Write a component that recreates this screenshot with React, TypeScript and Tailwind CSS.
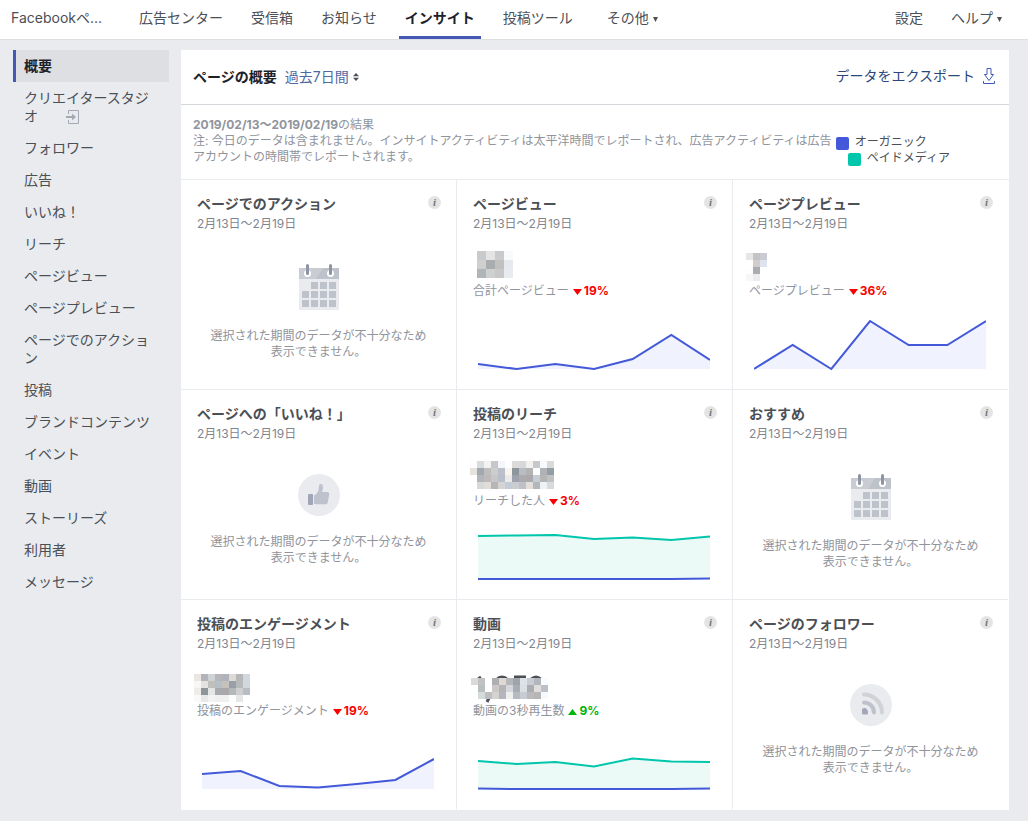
import clsx from "clsx";

type Series = { color: string; fill?: string; points: number[] };

type Mosaic = { x: number; y: number; size: number; rows: string[] };

type Card = {
  title: string;
  empty?: "calendar" | "like" | "follow";
  label?: string;
  change?: string;
  up?: boolean;
  mosaic?: Mosaic;
  peek?: boolean;
  series?: Series[];
};

const BLUE = "#4359d9";
const GREEN = "#00c6ac";

const mainTabs = ["広告センター", "受信箱", "お知らせ", "インサイト", "投稿ツール"];

const sideLinks = [
  "概要",
  "クリエイタースタジオ",
  "フォロワー",
  "広告",
  "いいね！",
  "リーチ",
  "ページビュー",
  "ページプレビュー",
  "ページでのアクション",
  "投稿",
  "ブランドコンテンツ",
  "イベント",
  "動画",
  "ストーリーズ",
  "利用者",
  "メッセージ",
];

const cards: Card[] = [
  { title: "ページでのアクション", empty: "calendar" },
  {
    title: "ページビュー",
    label: "合計ページビュー",
    change: "19%",
    mosaic: {
      x: 7,
      y: 3,
      size: 9,
      rows: [
        "c8cacb e4e4e4 c8cacb f9fafc",
        "cfcfcf a9adb0 c1c1c1 e6eaee",
        "b0b5b8 cfd1d1 c8c8c8 e8ecf1",
      ],
    },
    series: [{ color: BLUE, fill: "#f0f3fd", points: [45, 50, 45, 50, 40, 16, 41] }],
  },
  {
    title: "ページプレビュー",
    label: "ページプレビュー",
    change: "36%",
    mosaic: {
      x: 0,
      y: 5,
      size: 7,
      rows: [
        "e6e6e6 c3c2c4 c8cad4",
        "ffffff d2cccb dde4ed",
        "fefefe aaadb0 ffffff",
        "f8f7f6 ebecf0 ffffff",
      ],
    },
    series: [{ color: BLUE, fill: "#f0f3fd", points: [50, 26, 50, 2, 26, 26, 2] }],
  },
  { title: "ページへの「いいね！」", empty: "like" },
  {
    title: "投稿のリーチ",
    label: "リーチした人",
    change: "3%",
    mosaic: {
      x: 0,
      y: 3,
      size: 7,
      rows: [
        "fdfdfd d9dcdf f4f3f2 c5c7ca f4f6f9 ffffff dddbd9 d5d8dc f2f1f0 c6c8cb f8fbfd d9dbdb",
        "e6e2de a1a8af c0bdbd cccdcf babfc9 faf4ef 8f969b b8bdc3 b3b3b4 fdfdfd aeb2b7 929da5",
        "ffffff b2b6b9 bebab9 c7c7c9 b9bfc9 eceae8 9da2ae ada9ac aaa9ae c6cdd7 b5b5b5 c0c1c1",
        "ffffff d5d9da e0dcd8 b7b5b6 d5d4d5 c4cdd7 cbcdd0 bec2c7 e4dfdb b4b7b9 eef2f6 d9dbdb",
      ],
    },
    series: [
      { color: GREEN, fill: "#ebf9f7", points: [7, 6.5, 6, 10, 8.5, 11, 7.5] },
      { color: BLUE, points: [50, 50, 50, 50, 50, 50, 49.5] },
    ],
  },
  { title: "おすすめ", empty: "calendar" },
  {
    title: "投稿のエンゲージメント",
    label: "投稿のエンゲージメント",
    change: "19%",
    mosaic: {
      x: 0,
      y: 6,
      size: 7,
      rows: [
        "ebe6e2 b3b4b9 cdd3d6 b9b6b7 b0b3bc dedbd7 b6b7ba d3d8de",
        "f7f7f6 e4e3e0 bfbfbb b6bec7 c7c1bc 98a0a7 b6bab9 d2d7e0",
        "eeedea 8e969b e5e6e6 a9aaaf a9a9ad b3b8b8 ccced0 b8bcc5",
        "f9f9f8 e7e8e8 f3f3f3 eff0f2 eff0f2 fdfdfd e5e7e7 ffffff",
      ],
    },
    series: [{ color: BLUE, fill: "#f0f3fd", points: [35, 32, 47, 48.5, 45, 41, 20] }],
  },
  {
    title: "動画",
    label: "動画の3秒再生数",
    change: "9%",
    up: true,
    peek: true,
    mosaic: {
      x: 1,
      y: 10,
      size: 7,
      rows: [
        "dadada c0c2c3 ffffff aeafb1 dfd8d5 b4b6b9 9fa4aa dde1e8 c9cdd3 b3b6ba f7fcfe",
        "ffffff b8bfbf ffffff ccc8c7 b5b3b6 d4d7dc a7adb5 dbdee3 a9acb1 e1dddc bdc0c9",
        "ffffff d5dbdb bcbfbf d5d2d0 b3b7bb eef0f0 b6bac1 c8ccd2 bababd b5b6b6 f6fafd",
      ],
    },
    series: [
      { color: GREEN, fill: "#ebf9f7", points: [22, 25, 23, 27.5, 19.5, 22.5, 23] },
      { color: BLUE, points: [49.5, 50, 50, 50, 50, 50, 49.5] },
    ],
  },
  { title: "ページのフォロワー", empty: "follow" },
];

const Chart = ({ series }: { series: Series[] }) => {
  const step = 232 / 6;
  return (
    <svg viewBox="0 0 232 52" className="mt-5 ml-[5px] block w-[232px] h-[52px]">
      {series.map((s) => {
        const line = s.points.map((y, i) => `${i * step},${y}`).join(" ");
        return (
          <g key={s.color}>
            {s.fill && <polygon points={`0,50 ${line} 232,50`} fill={s.fill} />}
            <polyline points={line} fill="none" stroke={s.color} strokeWidth="2" />
          </g>
        );
      })}
    </svg>
  );
};

const HiddenValue = ({ mosaic, peek }: { mosaic: Mosaic; peek?: boolean }) => (
  <svg viewBox="0 0 90 35" shapeRendering="crispEdges" className="-ml-[3px] mt-3.5 block w-[90px] h-[35px]">
    {peek && (
      <g fill="none" stroke="#4b4f56" strokeWidth="3" shapeRendering="auto">
        <path d="M7 12l4-3M26 12q6-6 12 0M44 9h12M60 12q6-6 12 0M19 30l-2 4" />
      </g>
    )}
    {mosaic.rows.map((row, r) =>
      row.split(" ").map((color, c) =>
        color === "ffffff" ? null : (
          <rect
            key={`${r}-${c}`}
            x={mosaic.x + c * mosaic.size}
            y={mosaic.y + r * mosaic.size}
            width={mosaic.size}
            height={mosaic.size}
            fill={`#${color}`}
          />
        )
      )
    )}
  </svg>
);

const CalendarIcon = () => (
  <svg viewBox="0 0 40 46" className="w-10 h-[46px]">
    <path d="M0 4h40v42H0z" fill="#e9ebee" />
    <path d="M0 4h40v11H0z" fill="#bdc2cb" />
    <path d="M0 4h24l-7 11H0z" fill="#c9cdd3" />
    <circle cx="8.5" cy="9.5" r="3.5" fill="#fff" />
    <circle cx="31.5" cy="9.5" r="3.5" fill="#fff" />
    <path d="M8.5 1.5v8M31.5 1.5v8" stroke="#8d94a4" strokeWidth="3" strokeLinecap="round" />
    <path
      d="M12 18h7v7h-7zM21 18h7v7h-7zM30 18h7v7h-7zM3 27h7v7H3zM12 27h7v7h-7zM21 27h7v7h-7zM30 27h7v7h-7zM3 36h7v7H3zM12 36h7v7h-7zM21 36h7v7h-7zM30 36h7v7h-7z"
      fill="#bdc2cb"
    />
  </svg>
);

const LikeIcon = () => (
  <svg viewBox="0 0 42 42" className="size-[42px]">
    <circle cx="21" cy="21" r="21" fill="#e9ebee" />
    <rect x="10" y="20" width="5" height="11" rx="1" fill="#a0a6b6" />
    <path
      d="M16 21.5c3-1.500 4.500-4 4.800-7.500 0-2.500.5-4 1.900-4 1.800 0 2.300 1.700 2.300 3.500 0 1.700-.6 3.200-1 4.500h5.300c1.400 0 2.100 1 1.900 2.300l-1.400 7.900c-.3 1.500-.9 2.100-2.300 2.100H19c-1.500 0-2-.6-3-.9z"
      fill="#bdc2cd"
    />
  </svg>
);

const FollowIcon = () => (
  <svg viewBox="0 0 42 42" className="size-[42px]">
    <circle cx="21" cy="21" r="21" fill="#e9ebee" />
    <g fill="none" strokeWidth="4" strokeLinecap="round">
      <path d="M14 10.500c9.500 0 18 8 18 18" stroke="#d0d2d7" />
      <path d="M14 18.500c5.500 0 10 4.500 10 10" stroke="#bfc1cd" />
    </g>
    <path d="M12 25.500q0-1.500 2-1.500c2.500 0 4 2 4 4.500 0 1.700-.5 2-2 2h-2c-1.500 0-2-.5-2-2z" fill="#a3a5b8" />
  </svg>
);

const InfoIcon = () => (
  <button
    type="button"
    aria-label="詳細"
    className="flex size-[13px] items-center justify-center rounded-full bg-[#e4e4e4] font-['Liberation_Serif',serif] text-[11px] leading-none font-bold italic text-[#777]">
    i
  </button>
);

const Caret = () => (
  <svg viewBox="0 0 5 5" className="mt-1 size-[5px]">
    <path d="M0 0h5L2.500 5z" fill="#4b4f56" />
  </svg>
);

const InsightCard = ({ card }: { card: Card }) => (
  <article className="min-h-[210px] border-r border-b border-[#e9ebee] px-4 pt-3.5 nth-[3n]:border-r-white nth-[n+7]:border-b-white">
    <div className="flex items-start justify-between">
      <h3 className="text-sm leading-5 font-bold text-[#4b4f56]">{card.title}</h3>
      <div className="-mr-px pt-0.5">
        <InfoIcon />
      </div>
    </div>
    <p className="text-xs leading-5 text-[#7f858f]">2月13日〜2月19日</p>
    {card.empty && (
      <div className="mt-[30px] flex flex-col items-center gap-[18px] text-center text-xs leading-4 text-[#90949c]">
        {card.empty === "calendar" && <CalendarIcon />}
        {card.empty === "like" && <LikeIcon />}
        {card.empty === "follow" && <FollowIcon />}
        <p>
          選択された期間のデータが不十分なため
          <br />
          表示できません。
        </p>
      </div>
    )}
    {card.mosaic && <HiddenValue mosaic={card.mosaic} peek={card.peek} />}
    {card.label && (
      <p className="flex items-center gap-1 text-xs leading-4 text-[#90949c]">
        {card.label}
        <span className={clsx("flex items-center gap-0.5 font-bold", card.up ? "text-[#00b50c]" : "text-[#fa0000]")}>
          <svg viewBox="0 0 9 6" className="mt-px w-[9px] h-1.5 fill-current">
            <path d={card.up ? "M0 6h9L4.500 0z" : "M0 0h9L4.500 6z"} />
          </svg>
          {card.change}
        </span>
      </p>
    )}
    {card.series && <Chart series={card.series} />}
  </article>
);

const TopNav = () => (
  <header className="flex h-10 items-stretch border-b border-[#dddfe2] bg-white pr-5 pl-[11px] text-sm text-[#4b4f56]">
    <a href="#page" className="flex w-[106px] shrink-0 items-center pb-1">
      Facebookペ...
    </a>
    <nav className="flex flex-1 gap-4 whitespace-nowrap pl-4">
      {mainTabs.map((tab) => (
        <a
          key={tab}
          href="#tab"
          className={clsx(
            "flex items-center border-b-3 px-1.5 pb-px",
            tab === "インサイト" ? "border-[#4359b8] font-bold text-[#1d2129]" : "border-transparent"
          )}>
          {tab}
        </a>
      ))}
      <button type="button" className="flex items-center gap-1 px-3 pb-1">
        その他
        <Caret />
      </button>
    </nav>
    <div className="flex gap-4 whitespace-nowrap">
      <a href="#settings" className="flex items-center px-1.5 pb-1">
        設定
      </a>
      <button type="button" className="flex items-center gap-1 px-1.5 pb-1">
        ヘルプ
        <Caret />
      </button>
    </div>
  </header>
);

const Sidebar = () => (
  <nav className="w-[156px] shrink-0">
    {sideLinks.map((link, i) => (
      <a
        key={link}
        href="#section"
        className={clsx(
          "block border-l-3 py-[7px] pr-4 pl-2 text-sm leading-[18px]",
          i === 0 ? "border-[#4359b8] bg-[#dddfe3] font-bold text-[#1d2129]" : "border-transparent text-[#4b4f56]"
        )}>
        {link}
        {i === 1 && (
          <svg viewBox="0 0 13 14" className="ml-7 inline h-3.5 w-[13px]" fill="none" stroke="#a4a9b3">
            <path d="M2.500 4V.5h10v13h-10V10" />
            <path d="M0 7h7" strokeWidth="2" />
            <path d="M6 3.500L10 7l-4 3.500z" fill="#a4a9b3" stroke="none" />
          </svg>
        )}
      </a>
    ))}
  </nav>
);

export default function App() {
  return (
    <div className="min-h-screen bg-[#e9ebee] font-['Inter','Noto_Sans_CJK_JP',sans-serif]">
      <TopNav />
      <div className="flex gap-3 pt-2.5 pr-[19px] pb-[11px] pl-[13px]">
        <Sidebar />
        <main className="min-w-0 flex-1 bg-white">
          <div className="flex h-[55px] items-center justify-between border-b border-[#d3d6db] pr-3.5 pl-3 text-sm">
            <div className="flex items-center gap-2">
              <h2 className="font-bold text-[#1d2129]">ページの概要</h2>
              <div className="flex items-center gap-1">
                <select aria-label="期間" className="appearance-none text-[#4e69a2]">
                  <option>過去7日間</option>
                </select>
                <svg viewBox="0 0 6 8" className="h-2 w-1.5" fill="#4b4f56">
                  <path d="M0 3.200h6L3 0zM0 4.800h6L3 8z" />
                </svg>
              </div>
            </div>
            <a href="#export" className="flex items-center gap-2 pb-0.5 text-[#29487d]">
              データをエクスポート
              <svg viewBox="0 0 12 16" className="h-4 w-3" fill="none" stroke="#4359b8">
                <path d="M4 .5h4v6h2.500L6 12.500 1.500 6.500H4z" />
                <path d="M.5 13v2.500h11V13" />
              </svg>
            </a>
          </div>
          <div className="flex justify-between border-b border-[#e9ebee] pt-3 pr-[59px] pb-[13px] pl-3 text-xs leading-4">
            <p className="min-w-0 flex-1 text-[#90949c]">
              <b>2019/02/13〜2019/02/19</b>の結果
              <br />
              注: 今日のデータは含まれません。インサイトアクティビティは太平洋時間でレポートされ、広告アクティビティは広告アカウントの時間帯でレポートされます。
            </p>
            <ul className="shrink-0 pt-[17px] text-[#4b4f56]">
              <li className="flex items-end gap-1.5">
                <span className="size-[13px] rounded-xs bg-[#4359d9]" />
                オーガニック
              </li>
              <li className="ml-3 flex items-end gap-1.5">
                <span className="size-[13px] rounded-xs bg-[#00c6ac]" />
                ペイドメディア
              </li>
            </ul>
          </div>
          <section className="grid grid-cols-3">
            {cards.map((card) => (
              <InsightCard key={card.title} card={card} />
            ))}
          </section>
        </main>
      </div>
    </div>
  );
}
